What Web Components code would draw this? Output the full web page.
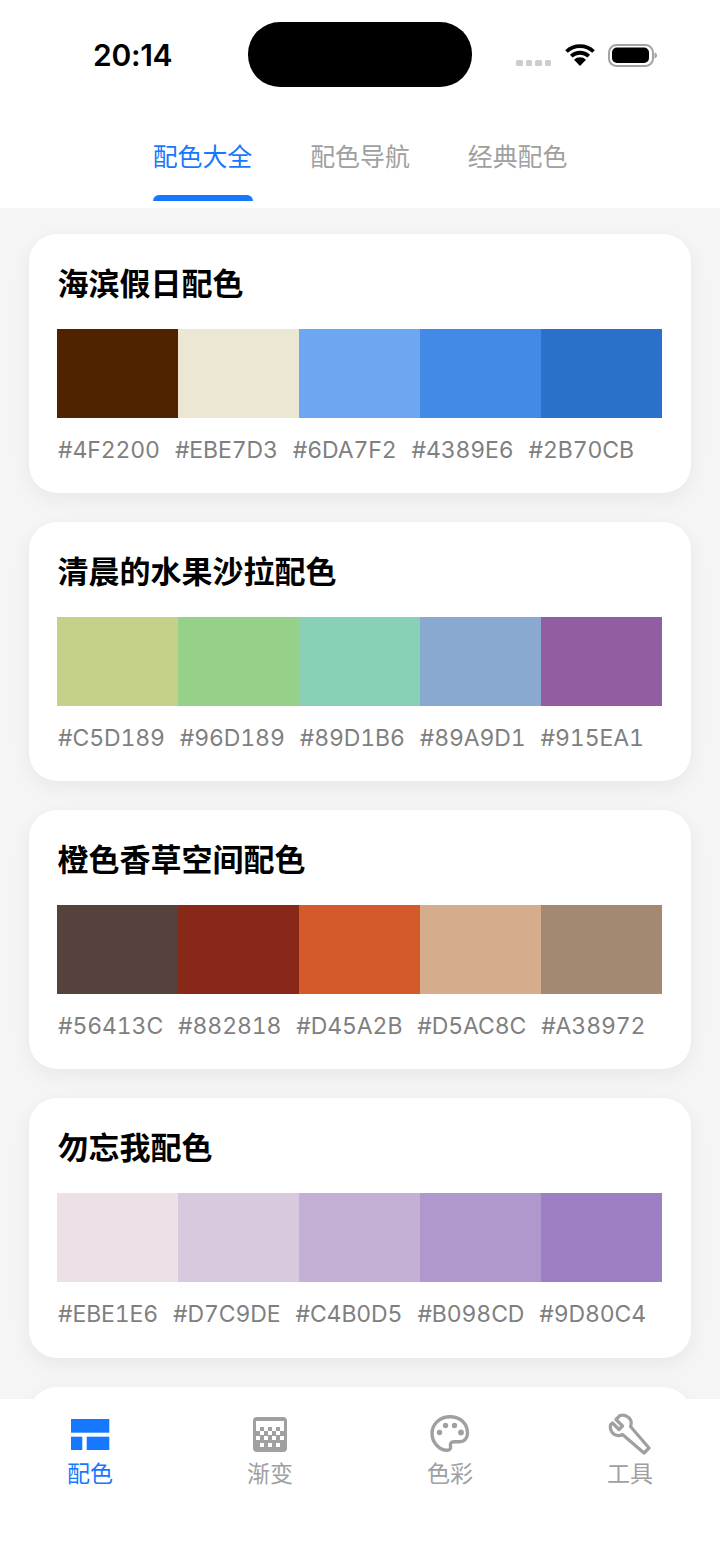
<!DOCTYPE html>
<html lang="zh">
<head>
<meta charset="utf-8">
<title>配色大全</title>
<style>
html, body { margin: 0; padding: 0; background: #f5f5f5; }
body { font-family: Inter, "Noto Sans CJK SC", sans-serif; }
</style>
</head>
<body>
<color-app></color-app>
<script>
const palettes = [
    { title: "海滨假日配色", colors: ["#4F2200", "#EBE7D3", "#6DA7F2", "#4389E6", "#2B70CB"] },
    { title: "清晨的水果沙拉配色", colors: ["#C5D189", "#96D189", "#89D1B6", "#89A9D1", "#915EA1"] },
    { title: "橙色香草空间配色", colors: ["#56413C", "#882818", "#D45A2B", "#D5AC8C", "#A38972"] },
    { title: "勿忘我配色", colors: ["#EBE1E6", "#D7C9DE", "#C4B0D5", "#B098CD", "#9D80C4"] },
    // only the top edge of this card shows above the bottom bar
    { title: "", colors: [] }
];

class StatusBar extends HTMLElement {
    connectedCallback() {
        this.attachShadow({ mode: "open" }).innerHTML = `
        <style>
        :host {
            display: flex;
            align-items: flex-start;
            height: 104px;
            background: #fff;
            box-sizing: border-box;
            padding-top: 22px;
        }
        .time {
            width: 248px;
            box-sizing: border-box;
            padding: 15px 0 0 93px;
            font: 600 30px/36px Inter, "Liberation Sans", sans-serif;
            letter-spacing: -.3px;
            color: #000;
        }
        .island {
            width: 224px;
            height: 65px;
            border-radius: 32px;
            background: #000;
        }
        .icons {
            display: flex;
            align-items: flex-start;
            padding: 21px 0 0 44px;
        }
        .dots { display: flex; gap: 3px; margin: 17px 14px 0 0; }
        .dots i { width: 6.5px; height: 6px; border-radius: 1.5px; background: #cdcdcd; }
        svg { display: block; }
        </style>
        <div class="time">20:14</div>
        <div class="island"></div>
        <div class="icons">
            <div class="dots"><i></i><i></i><i></i><i></i></div>
            <svg width="30" height="23" viewBox="0 0 30 23" style="margin-right:13px">
                <path d="M1.500 8.500a19.500 19.500 0 0 1 27 0M6.200 13.200a13 13 0 0 1 17.600 0" fill="none" stroke="#000" stroke-width="3.800"/>
                <path d="M15 23l-6-6.200a8.600 8.600 0 0 1 12 0z" fill="#000"/>
            </svg>
            <svg width="50" height="23" viewBox="0 0 50 23" style="margin-top:1px">
                <rect x="1" y="1" width="44" height="21" rx="7.500" fill="none" stroke="#a3a3a3" stroke-width="2"/>
                <rect x="4" y="3.500" width="37" height="15.500" rx="5" fill="#000"/>
                <path d="M46.500 8.500c1.600.4 2.500 1.500 2.500 3s-.9 2.600-2.500 3z" fill="#a3a3a3"/>
            </svg>
        </div>
        `;
    }
}

class TopTabs extends HTMLElement {
    connectedCallback() {
        const tabs = (this.getAttribute("items") || "").split(",");
        this.attachShadow({ mode: "open" }).innerHTML = `
        <style>
        :host {
            display: flex;
            justify-content: center;
            gap: 58px;
            height: 104px;
            background: #fff;
        }
        .tab {
            position: relative;
            height: 104px;
            box-sizing: border-box;
            padding-top: 32.5px;
            font: 400 24.9px/36px "Noto Sans CJK SC", sans-serif;
            color: #a0a0a0;
        }
        .tab--on { color: #1677ff; }
        .tab--on::after {
            content: "";
            position: absolute;
            left: 0;
            right: -1px;
            top: 91px;
            height: 6px;
            border-radius: 6px 6px 0 0;
            background: #1677ff;
        }
        </style>
        ${tabs.map((t, i) => `<div class="tab ${i === 0 ? "tab--on" : ""}">${t}</div>`).join("")}
        `;
    }
}

class PaletteCard extends HTMLElement {
    connectedCallback() {
        const colors = (this.getAttribute("colors") || "").split(",").filter(Boolean);
        this.attachShadow({ mode: "open" }).innerHTML = `
        <style>
        :host {
            display: block;
            flex: none;
            height: 259.25px;
            box-sizing: border-box;
            padding: 26px 29px 0 28px;
            background: #fff;
            border-radius: 28px;
            box-shadow: 0 6px 20px rgba(0, 0, 0, .06);
        }
        .title {
            height: 69px;
            padding-left: .5px;
            box-sizing: border-box;
            font: 700 31px/44px "Noto Sans CJK SC", sans-serif;
            color: #000;
        }
        .bar { display: flex; height: 89px; }
        .bar div { flex: 1; }
        .codes {
            display: flex;
            gap: 15px;
            padding: 17px 0 0 1px;
            font: 400 23px/30px Inter, "Liberation Sans", sans-serif;
            font-variant-numeric: tabular-nums;
            letter-spacing: -.12px;
            color: #7f7f7f;
        }
        </style>
        <div class="title"><slot></slot></div>
        <div class="bar">${colors.map(c => `<div style="background:${c}"></div>`).join("")}</div>
        <div class="codes">${colors.map(c => `<span>${c}</span>`).join("")}</div>
        `;
    }
}

class TabItem extends HTMLElement {
    connectedCallback() {
        this.attachShadow({ mode: "open" }).innerHTML = `
        <style>
        :host {
            display: flex;
            flex-direction: column;
            align-items: center;
            color: #a0a0a0;
            font: 400 23px/30px "Noto Sans CJK SC", sans-serif;
        }
        :host([active]) { color: #1677ff; }
        .icon { height: 41px; }
        ::slotted(svg) { display: block; }
        </style>
        <div class="icon"><slot name="icon"></slot></div>
        <div><slot></slot></div>
        `;
    }
}

class BottomBar extends HTMLElement {
    connectedCallback() {
        this.attachShadow({ mode: "open" }).innerHTML = `
        <style>
        :host {
            display: grid;
            grid-template-columns: repeat(4, 1fr);
            flex: none;
            position: relative;
            height: 159px;
            box-sizing: border-box;
            padding-top: 17px;
            background: #fff;
        }
        </style>
        <slot></slot>
        `;
    }
}

class ColorApp extends HTMLElement {
    connectedCallback() {
        this.attachShadow({ mode: "open" }).innerHTML = `
        <style>
        :host {
            display: flex;
            flex-direction: column;
            width: 720px;
            height: 1558px;
            overflow: hidden;
            background: #f5f5f5;
        }
        .list {
            flex: 1;
            min-height: 0;
            overflow: hidden;
            display: flex;
            flex-direction: column;
            gap: 29px;
            padding: 25.7px 29px 0;
        }
        </style>
        <status-bar></status-bar>
        <top-tabs items="配色大全,配色导航,经典配色"></top-tabs>
        <div class="list">
            ${palettes.map(p => `<palette-card colors="${p.colors.join(",")}">${p.title}</palette-card>`).join("")}
        </div>
        <bottom-bar>
            <tab-item active>
                <svg slot="icon" width="40" height="35" viewBox="0 0 40 35" fill="currentColor">
                    <rect x="1" y="3" width="38.300" height="13.700"/>
                    <rect x="1" y="20.700" width="11.300" height="13.300"/>
                    <rect x="16.700" y="20.700" width="22.600" height="13.300"/>
                </svg>
                配色
            </tab-item>
            <tab-item>
                <svg slot="icon" width="36" height="36" viewBox="0 0 36 36">
                    <rect x="1" y="1" width="34" height="35" rx="4" fill="currentColor"/>
                    <path fill="#fff" d="M4 5h28v6H4zM4 11h4v4H4zM12 11h4v4h-4zM20 11h4v4h-4zM28 11h4v4h-4zM8 15h4v4H8zM16 15h4v4h-4zM24 15h4v4h-4zM4 20h4v4H4zM12 20h4v4h-4zM20 20h4v4h-4zM28 20h4v4h-4zM8 27h4v4H8zM16 27h4v4h-4zM24 27h4v4h-4z"/>
                </svg>
                渐变
            </tab-item>
            <tab-item>
                <svg slot="icon" width="40" height="38" viewBox="0 0 40 38" style="margin-top:-2px">
                    <path d="M20 2.700C10 2.700 2 10 2 19.500S10 36.300 17 36.300c3 0 4-2 3.500-4-.6-2.500.6-4.500 3.500-4.500h5c5.500 0 8.500-3.500 8.500-8.500C37.500 9.500 30 2.700 20 2.700z" fill="none" stroke="currentColor" stroke-width="3.400"/>
                    <circle cx="9.500" cy="18.500" r="2.700" fill="currentColor"/>
                    <circle cx="15.500" cy="11.500" r="2.700" fill="currentColor"/>
                    <circle cx="24.500" cy="11.500" r="2.700" fill="currentColor"/>
                    <circle cx="31" cy="18.500" r="2.900" fill="currentColor"/>
                </svg>
                色彩
            </tab-item>
            <tab-item>
                <svg slot="icon" width="44" height="42" viewBox="0 0 44 42" style="margin-top:-3px">
                    <path d="M12 2.500l-4 4 6.500 6.500-3.500 3.500L4.500 10 2.500 12c-1 5 2 10 7 10.500 2 .2 3.500-.2 5-1L36 40l5-5-18.500-21.500c.8-2 1-4 .3-6C21 3 16 1.500 12 2.500z" fill="none" stroke="currentColor" stroke-width="3.200" stroke-linejoin="round"/>
                </svg>
                工具
            </tab-item>
        </bottom-bar>
        `;
    }
}

customElements.define("status-bar", StatusBar);
customElements.define("top-tabs", TopTabs);
customElements.define("palette-card", PaletteCard);
customElements.define("tab-item", TabItem);
customElements.define("bottom-bar", BottomBar);
customElements.define("color-app", ColorApp);
</script>
</body>
</html>
